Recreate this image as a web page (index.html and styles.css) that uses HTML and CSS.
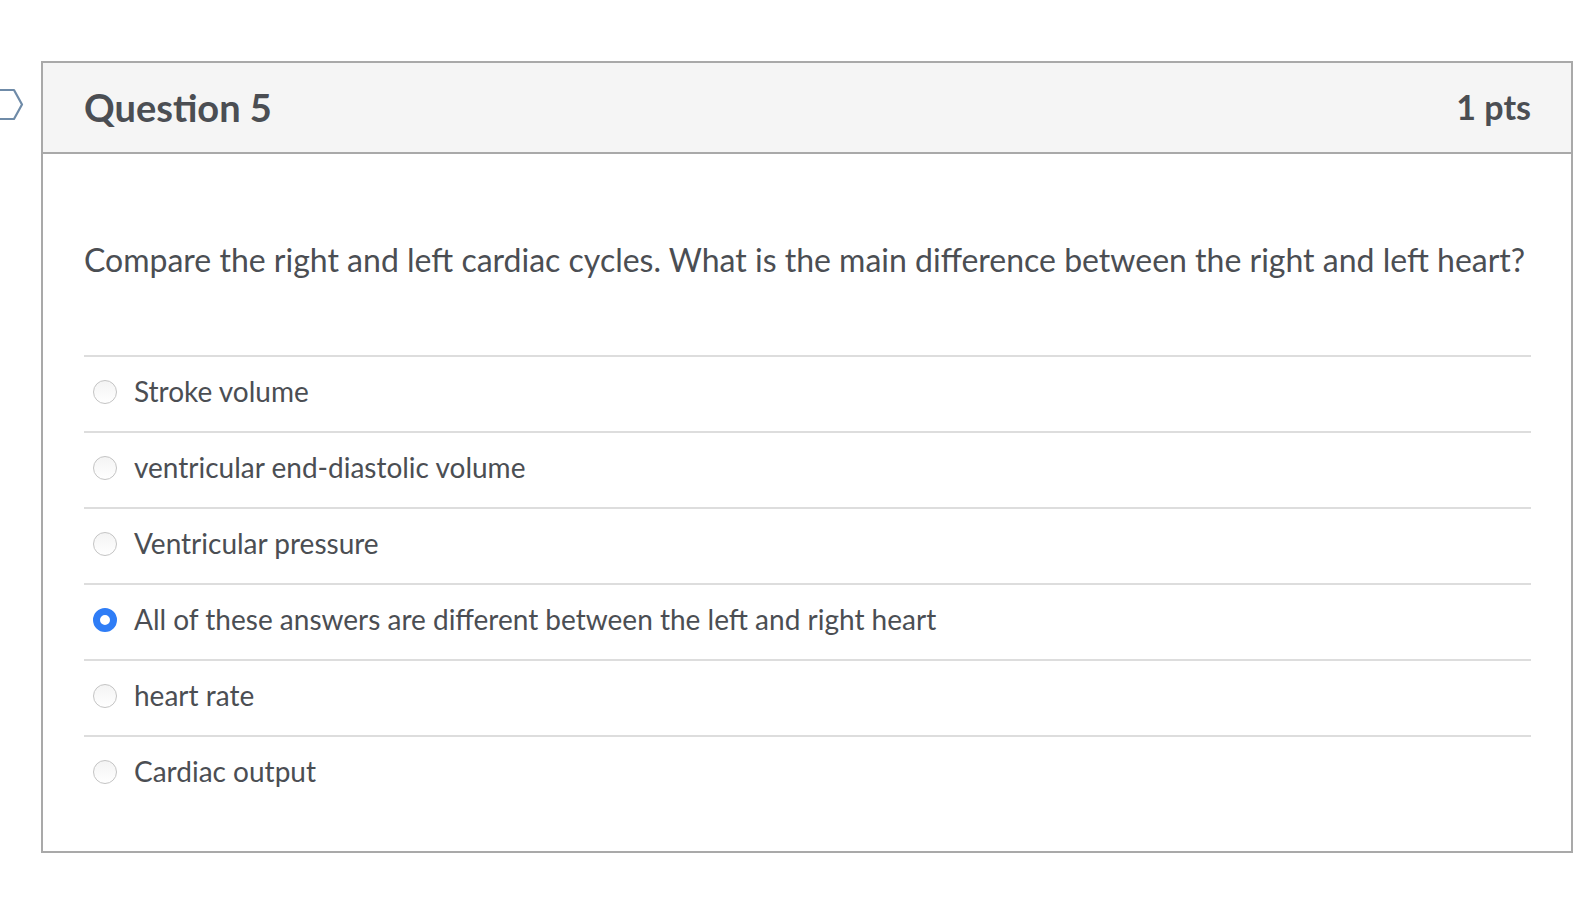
FILE: index.html
```html
<!DOCTYPE html>
<html>
<head>
<meta charset="utf-8">
<link rel="stylesheet" href="styles.css">
</head>
<body>
<div class="page">
  <div class="flag">
    <svg width="30" height="40" viewBox="0 0 30 40"><path d="M-10 11 H14 L22 25.5 L14 40 H-10" transform="translate(0,-1)" fill="none" stroke="#6f8ba8" stroke-width="2.2" stroke-linejoin="round"/></svg>
  </div>
  <div class="question">
    <div class="q-header">
      <h2 class="q-title">Question 5</h2>
      <div class="q-pts">1 pts</div>
    </div>
    <div class="q-body">
      <p class="q-text">Compare the right and left cardiac cycles. What is the main difference between the right and left heart?</p>
      <div class="answers">
        <div class="answer"><span class="radio"></span><span class="label">Stroke volume</span></div>
        <div class="answer"><span class="radio"></span><span class="label">ventricular end-diastolic volume</span></div>
        <div class="answer"><span class="radio"></span><span class="label">Ventricular pressure</span></div>
        <div class="answer"><span class="radio checked"></span><span class="label">All of these answers are different between the left and right heart</span></div>
        <div class="answer"><span class="radio"></span><span class="label">heart rate</span></div>
        <div class="answer"><span class="radio"></span><span class="label">Cardiac output</span></div>
      </div>
    </div>
  </div>
</div>
</body>
</html>
```

FILE: styles.css
```css
html, body {
  margin: 0;
  padding: 0;
  background: #fff;
}
body {
  font-family: Lato, "Liberation Sans", sans-serif;
  color: #4b4e53;
}
.page {
  position: relative;
  padding-top: 61px;
  padding-left: 41px;
}
.flag {
  position: absolute;
  left: 0;
  top: 80px;
}
.question {
  width: 1528px;
  border: 2px solid #a9a9a9;
}
.q-header {
  height: 87px;
  background: #f5f5f5;
  border-bottom: 2px solid #a9a9a9;
  display: flex;
  align-items: center;
  justify-content: space-between;
  padding: 0 40px 2px 41px;
}
.q-title {
  margin: 0;
  font-size: 38px;
  font-weight: 700;
  color: #4b4e53;
}
.q-pts {
  font-size: 34px;
  font-weight: 700;
  color: #4b4e53;
}
.q-body {
  padding: 84px 40px 40px 41px;
}
.q-text {
  margin: 0 0 73px;
  font-size: 32px;
  line-height: 44px;
}
.answer {
  border-top: 2px solid #dddddd;
  display: flex;
  align-items: center;
  padding-left: 9px;
  padding-bottom: 5px;
  box-sizing: content-box;
  height: 69px;
}
.radio {
  width: 22px;
  height: 22px;
  border-radius: 50%;
  border: 1px solid #c4c4c4;
  background: linear-gradient(#f4f4f4, #ffffff);
  margin-right: 17px;
  box-sizing: content-box;
  flex: none;
}
.radio.checked {
  border: 7px solid #2f7df6;
  width: 10px;
  height: 10px;
  background: #fff;
}
.label {
  font-size: 28px;
  position: relative;
  top: -1px;
}
```
